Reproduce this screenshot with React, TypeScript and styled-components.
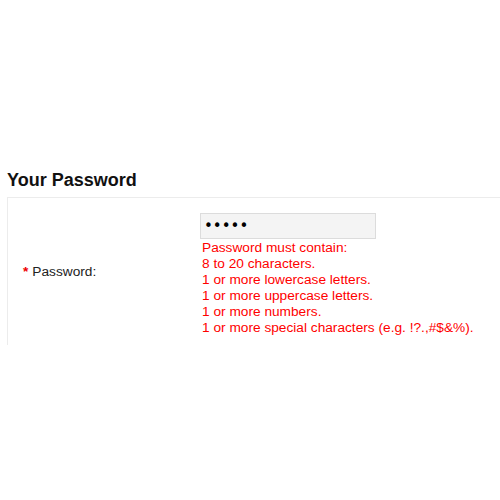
import React from "react";
import styled, { createGlobalStyle } from "styled-components";

const Global = createGlobalStyle`
  html, body { margin: 0; padding: 0; background: #fff; }
  body { font-family: "Liberation Sans", Arial, sans-serif; }
`;

const Page = styled.div`
  width: 500px;
  height: 500px;
  overflow: hidden;
  padding-top: 170px;
  box-sizing: border-box;
`;

const Heading = styled.h2`
  margin: 0 0 6px 7px;
  font-size: 18px;
  line-height: 21px;
  font-weight: bold;
  color: #111;
`;

const Panel = styled.div`
  margin-left: 7px;
  border: 1px solid #ececec;
  border-right: none;
  border-bottom: none;
  padding: 15px 0 9px 0;
  display: grid;
  grid-template-columns: 192px 1fr;
  align-items: center;
`;

const Label = styled.label`
  padding-left: 15px;
  font-size: 13.7px;
  color: #222;
  margin-top: -6px;
`;

const Star = styled.span`
  color: #e00;
  margin-right: 4px;
  font-weight: bold;
`;

const Field = styled.div`
  display: flex;
  flex-direction: column;
  align-items: flex-start;
`;

const Input = styled.input`
  width: 176px;
  height: 26px;
  box-sizing: border-box;
  border: 1px solid #dcdcdc;
  background: #f4f4f4;
  padding: 0 3px;
  font-size: 15px;
  font-family: "DejaVu Sans", sans-serif;
  letter-spacing: 0px;
  color: #000;
  outline: none;
  margin-bottom: 1px;
`;

const Errors = styled.div`
  color: #f00;
  font-size: 13.7px;
  line-height: 16px;
  padding-left: 2px;
`;

export default function App() {
  return (
    <>
      <Global />
      <Page>
        <Heading>Your Password</Heading>
        <Panel>
          <Label>
            <Star>*</Star>Password:
          </Label>
          <Field>
            <Input type="password" defaultValue="abcde" readOnly />
            <Errors>
              <div>Password must contain:</div>
              <div>8 to 20 characters.</div>
              <div>1 or more lowercase letters.</div>
              <div>1 or more uppercase letters.</div>
              <div>1 or more numbers.</div>
              <div>1 or more special characters (e.g. !?.,#$&amp;%).</div>
            </Errors>
          </Field>
        </Panel>
      </Page>
    </>
  );
}
